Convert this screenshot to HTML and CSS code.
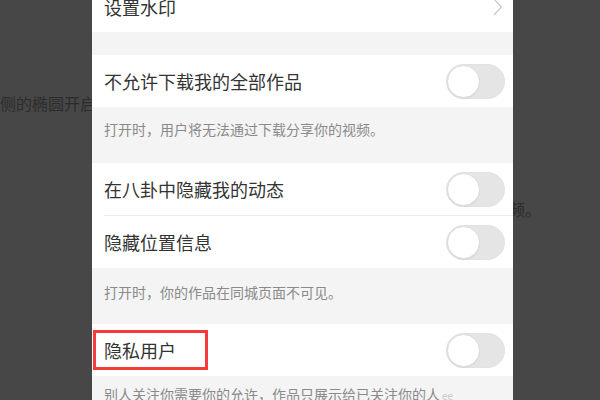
FILE: index.html
```html
<!DOCTYPE html>
<html>
<head>
<meta charset="utf-8">
<link rel="stylesheet" href="styles.css">
</head>
<body>
<div class="page">
  <div class="bg-line bg-line-1">右侧的椭圆开启隐私用户</div>
  <div class="bg-line bg-line-2">用户将无法通过下载分享你的视频。</div>
</div>
<div class="panel">
  <div class="row row-top">
    <span class="label">设置水印</span>
    <svg class="chev" width="10" height="18" viewBox="0 0 10 18"><path d="M1 1 L8.5 9 L1 17" fill="none" stroke="#c8c8c8" stroke-width="1.2"/></svg>
  </div>
  <div class="gap"></div>
  <div class="row">
    <span class="label">不允许下载我的全部作品</span>
    <span class="toggle"><span class="knob"></span></span>
  </div>
  <div class="desc">打开时，用户将无法通过下载分享你的视频。</div>
  <div class="group">
    <div class="row">
      <span class="label">在八卦中隐藏我的动态</span>
      <span class="toggle"><span class="knob"></span></span>
    </div>
    <div class="divider"></div>
    <div class="row">
      <span class="label">隐藏位置信息</span>
      <span class="toggle"><span class="knob"></span></span>
    </div>
  </div>
  <div class="desc desc-2">打开时，你的作品在同城页面不可见。</div>
  <div class="row row-private">
    <span class="label">隐私用户</span>
    <span class="toggle"><span class="knob"></span></span>
    <span class="highlight"></span>
  </div>
  <div class="desc desc-3">别人关注你需要你的允许，作品只展示给已关注你的人<span class="ee">ee</span></div>
</div>
</body>
</html>
```

FILE: styles.css
```css
html, body {
  margin: 0;
  padding: 0;
}
body {
  width: 600px;
  height: 400px;
  overflow: hidden;
  background: #474747;
  font-family: "Noto Sans CJK SC", "Noto Sans", sans-serif;
  position: relative;
}
.page {
  display: flex;
  flex-direction: column;
}
.bg-line {
  color: #2c2c2c;
  font-size: 16px;
  line-height: 20px;
  white-space: nowrap;
}
.bg-line-1 {
  margin-top: 93px;
  margin-left: -16px;
}
.bg-line-2 {
  margin-top: 86px;
  width: 541px;
  display: flex;
  justify-content: flex-end;
}
.panel {
  position: absolute;
  left: 92px;
  top: 0;
  width: 421px;
  height: 400px;
  overflow: hidden;
  background: #f4f4f4;
  display: flex;
  flex-direction: column;
}
.row {
  position: relative;
  flex: none;
  height: 52px;
  background: #fff;
  display: flex;
  align-items: center;
  justify-content: space-between;
  padding: 0 8px 0 12px;
}
.row-top {
  margin-top: -18px;
  height: 50px;
  padding-right: 10px;
}
.chev {
  margin-top: 0;
}
.label {
  font-size: 18px;
  color: #333;
  line-height: 24px;
}
.gap {
  flex: none;
  height: 23px;
}
.desc {
  flex: none;
  height: 56px;
  box-sizing: border-box;
  padding: 12px 12px 0;
  font-size: 14px;
  line-height: 20px;
  color: #8a8a8a;
  white-space: nowrap;
}
.desc-2 {
  padding-top: 14px;
}
.desc-3 {
  padding-top: 8px;
}
.ee {
  font-size: 10px;
  color: #c8c8c8;
  margin-left: 2px;
}
.group {
  flex: none;
  background: #fff;
}
.group .row {
  height: 52px;
}
.divider {
  height: 1px;
  margin-left: 12px;
  background: #ececec;
}
.toggle {
  width: 59px;
  height: 35px;
  box-sizing: border-box;
  border-radius: 18px;
  background: #e5e5e5;
  border: 1px solid #e2e2e2;
  position: relative;
  display: flex;
  align-items: center;
}
.knob {
  width: 33px;
  height: 33px;
  box-sizing: border-box;
  border-radius: 50%;
  background: #fff;
  border: 1px solid #dcdcdc;
  box-shadow: 0 1px 1px rgba(0,0,0,0.05);
}
.highlight {
  position: absolute;
  left: 1px;
  top: 6px;
  width: 115px;
  height: 40px;
  box-sizing: border-box;
  border: 3px solid #f73b3b;
}
```
